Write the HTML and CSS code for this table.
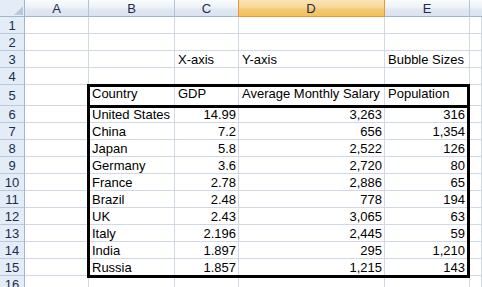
FILE: index.html
```html
<!DOCTYPE html>
<html>
<head>
<meta charset="utf-8">
<link rel="stylesheet" href="styles.css">
</head>
<body>
<div class="wrap">
<div class="sheet">
  <div class="corner"><svg width="10" height="10" viewBox="0 0 10 10"><polygon points="10,1 10,10 1,10" fill="#b9c9dc"/></svg></div>
  <div class="ch">A</div><div class="ch">B</div><div class="ch">C</div><div class="ch sel">D</div><div class="ch">E</div><div class="ch last"></div>

  <div class="rh">1</div><div class="c"></div><div class="c"></div><div class="c"></div><div class="c"></div><div class="c"></div><div class="c"></div>
  <div class="rh">2</div><div class="c"></div><div class="c"></div><div class="c"></div><div class="c"></div><div class="c"></div><div class="c"></div>
  <div class="rh">3</div><div class="c"></div><div class="c"></div><div class="c">X-axis</div><div class="c">Y-axis</div><div class="c">Bubble Sizes</div><div class="c"></div>
  <div class="rh">4</div><div class="c"></div><div class="c"></div><div class="c"></div><div class="c"></div><div class="c"></div><div class="c"></div>
  <div class="rh">5</div><div class="c hd"></div><div class="c hd">Country</div><div class="c hd">GDP</div><div class="c hd">Average Monthly Salary</div><div class="c hd">Population</div><div class="c hd"></div>
  <div class="rh">6</div><div class="c"></div><div class="c">United States</div><div class="c r">14.99</div><div class="c r">3,263</div><div class="c r e">316</div><div class="c"></div>
  <div class="rh">7</div><div class="c"></div><div class="c">China</div><div class="c r">7.2</div><div class="c r">656</div><div class="c r e">1,354</div><div class="c"></div>
  <div class="rh">8</div><div class="c"></div><div class="c">Japan</div><div class="c r">5.8</div><div class="c r">2,522</div><div class="c r e">126</div><div class="c"></div>
  <div class="rh">9</div><div class="c"></div><div class="c">Germany</div><div class="c r">3.6</div><div class="c r">2,720</div><div class="c r e">80</div><div class="c"></div>
  <div class="rh">10</div><div class="c"></div><div class="c">France</div><div class="c r">2.78</div><div class="c r">2,886</div><div class="c r e">65</div><div class="c"></div>
  <div class="rh">11</div><div class="c"></div><div class="c">Brazil</div><div class="c r">2.48</div><div class="c r">778</div><div class="c r e">194</div><div class="c"></div>
  <div class="rh">12</div><div class="c"></div><div class="c">UK</div><div class="c r">2.43</div><div class="c r">3,065</div><div class="c r e">63</div><div class="c"></div>
  <div class="rh">13</div><div class="c"></div><div class="c">Italy</div><div class="c r">2.196</div><div class="c r">2,445</div><div class="c r e">59</div><div class="c"></div>
  <div class="rh">14</div><div class="c"></div><div class="c">India</div><div class="c r">1.897</div><div class="c r">295</div><div class="c r e">1,210</div><div class="c"></div>
  <div class="rh">15</div><div class="c"></div><div class="c">Russia</div><div class="c r">1.857</div><div class="c r">1,215</div><div class="c r e">143</div><div class="c"></div>
  <div class="rh">16</div><div class="c"></div><div class="c"></div><div class="c"></div><div class="c"></div><div class="c"></div><div class="c"></div>
</div>
<div class="overlay">
  <div class="range"></div>
  <div class="range-head"></div>
</div>
</div>
</body>
</html>
```

FILE: styles.css
```css
html, body {
  margin: 0;
  padding: 0;
  background: #ffffff;
  overflow: hidden;
}

.wrap {
  display: grid;
  width: 482px;
}

.sheet,
.overlay {
  grid-area: 1 / 1;
  display: grid;
  grid-template-columns: 25px 64px 86px 64px 146px 85px 1fr;
  grid-template-rows: 17px 17px 17px 17px 17px 21px repeat(10, 17px) 17px;
}

.sheet {
  font-family: "Liberation Sans", Arial, sans-serif;
  font-size: 13px;
  line-height: 15px;
  color: #000000;
}

.overlay {
  pointer-events: none;
}

.corner {
  background: #e4ecf7;
  border-right: 1px solid #9eb6ce;
  border-bottom: 1px solid #9eb6ce;
  box-sizing: border-box;
  display: flex;
  align-items: flex-end;
  justify-content: flex-end;
  padding: 0 1px 1px 0;
}

.corner svg { display: block; }

.ch {
  box-sizing: border-box;
  background: linear-gradient(#fafbfd 0%, #eef2f8 45%, #e0e7f1 60%, #dbe3ee 100%);
  border-right: 1px solid #b3c4d8;
  border-bottom: 1px solid #9eb6ce;
  display: flex;
  align-items: center;
  justify-content: center;
  color: #1b2d4b;
  padding-top: 1px;
}

.ch.sel {
  background: linear-gradient(#fbe3b5 0%, #f8d79a 45%, #f3c86e 60%, #f1c15f 100%);
  border-right: 1px solid #f29536;
  border-bottom: 1px solid #f29536;
  box-shadow: inset 1px 0 0 #f29536;
  margin-left: -1px;
}

.ch.last { border-right: none; }

.rh {
  box-sizing: border-box;
  background: #e4ecf7;
  border-right: 1px solid #9eb6ce;
  border-bottom: 1px solid #b8c9dc;
  display: flex;
  align-items: center;
  justify-content: center;
  color: #1b2d4b;
  padding-top: 1px;
}

.c {
  box-sizing: border-box;
  border-right: 1px solid #d0d7e5;
  border-bottom: 1px solid #d0d7e5;
  display: flex;
  align-items: flex-end;
  padding: 0 2px 0 3px;
  white-space: nowrap;
}

.c.hd {
  padding-bottom: 4px;
}

.c.r {
  justify-content: flex-end;
  padding: 0 2px 0 2px;
}

.c.r.e {
  padding-right: 4px;
}

.range {
  grid-column: 3 / 7;
  grid-row: 6 / 17;
  border: 3px solid #000000;
  margin: -1px 0 -2px -2px;
}

.range-head {
  grid-column: 3 / 7;
  grid-row: 6 / 7;
  border-bottom: 3px solid #000000;
  margin: 0 0 -2px -2px;
}
```
